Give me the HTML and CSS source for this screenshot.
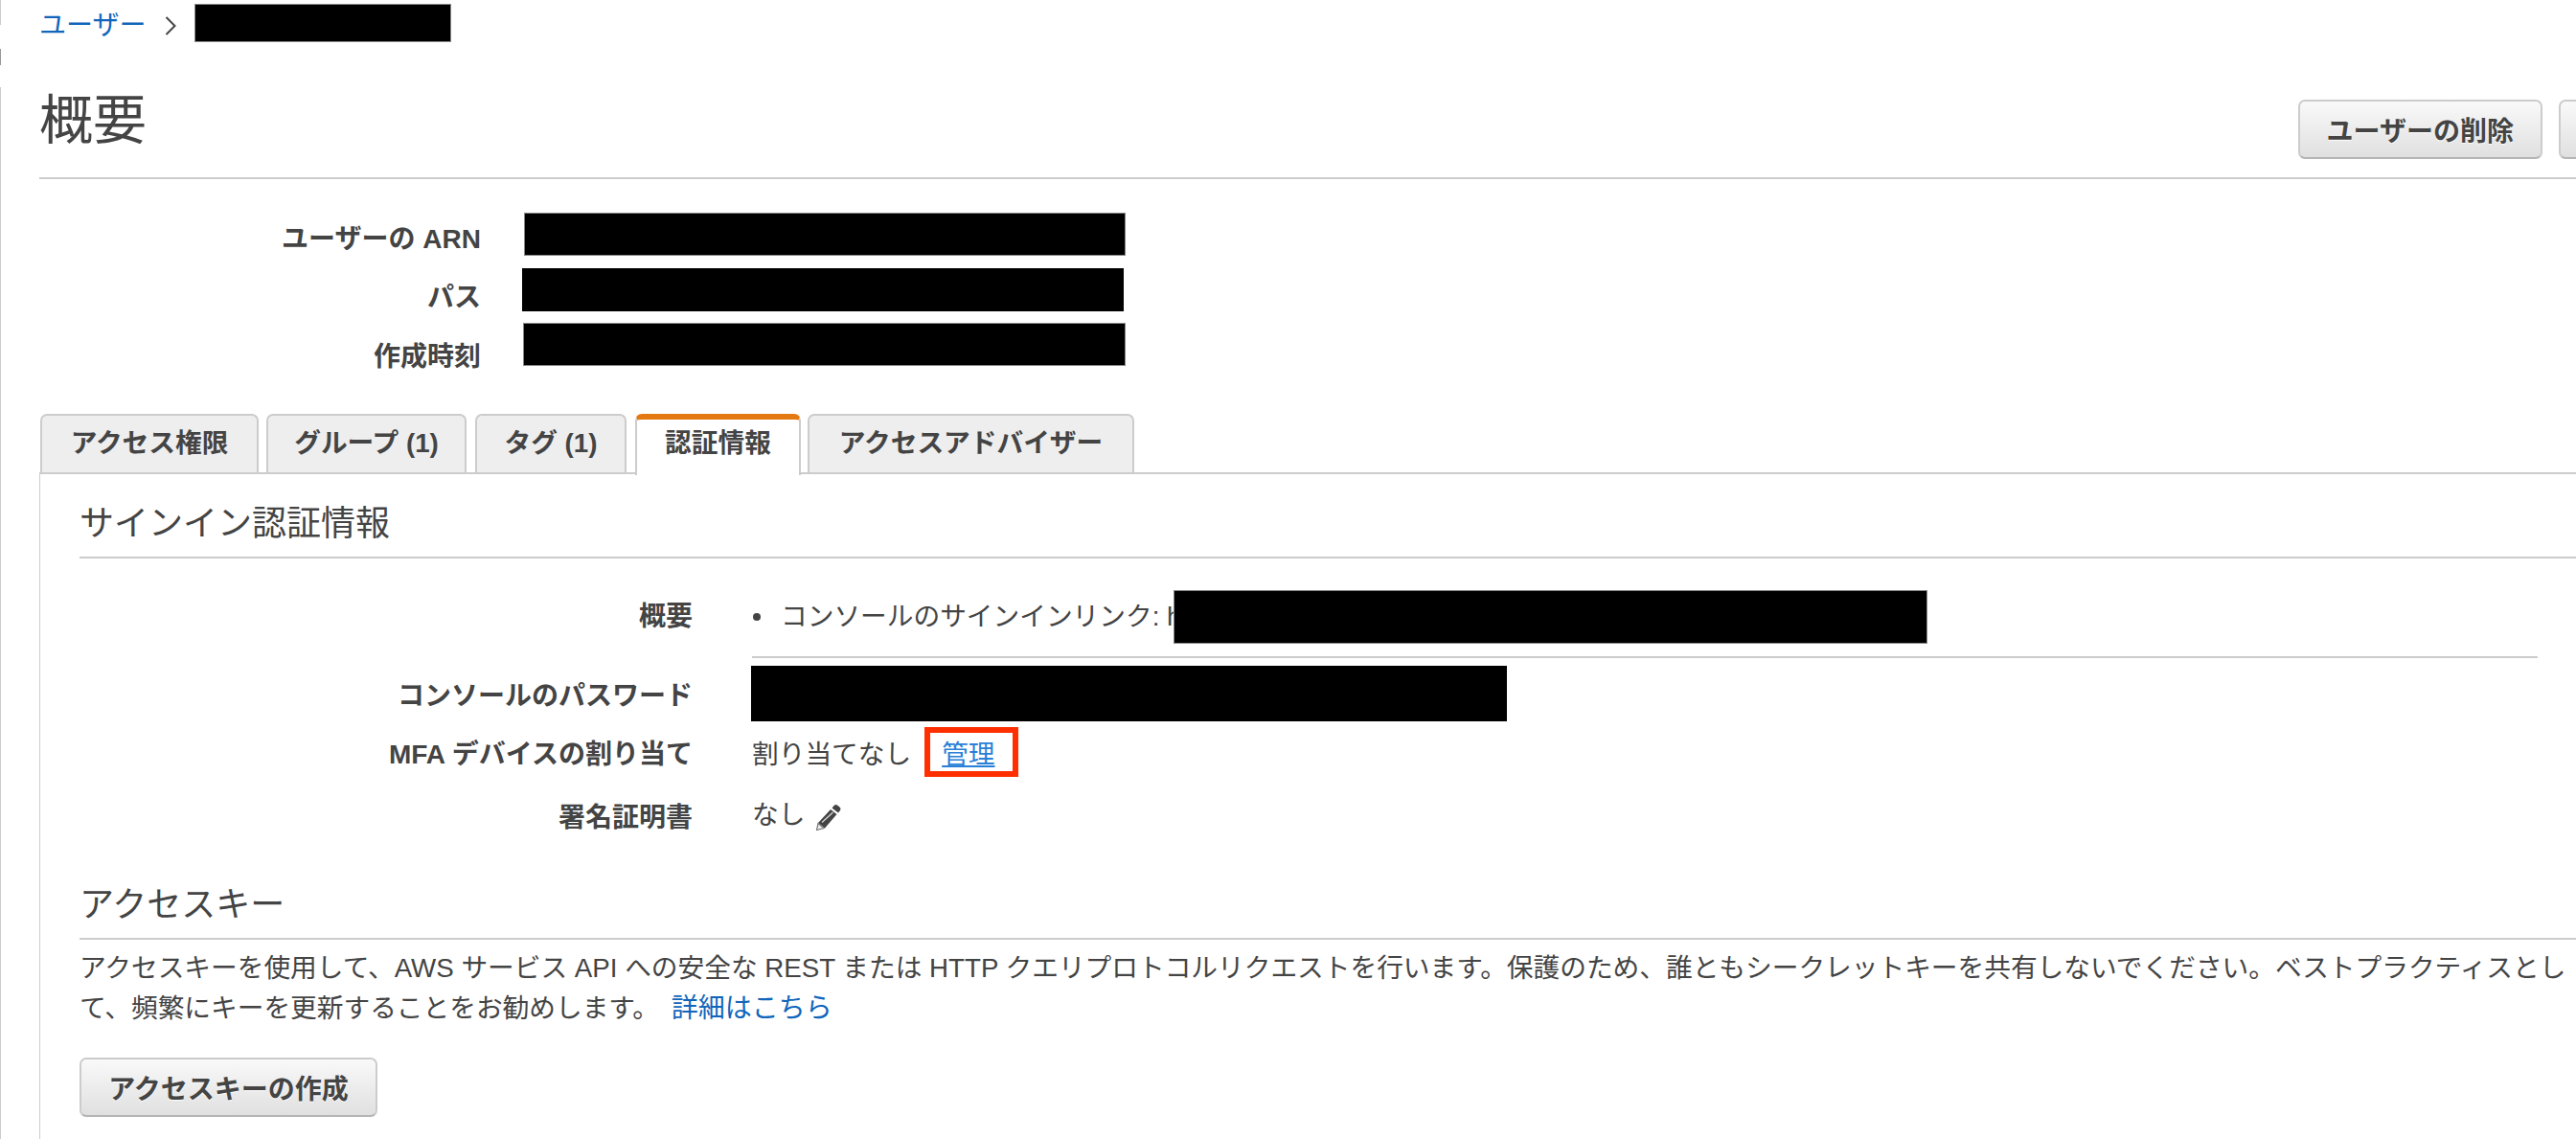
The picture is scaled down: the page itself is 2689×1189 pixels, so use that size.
FILE: index.html
```html
<!DOCTYPE html>
<html lang="ja">
<head>
  <meta charset="UTF-8">
  <title>ユーザー</title>
  <link rel="stylesheet" href="styles.css">
</head>
<body>
  <div class="rail">
    <div class="rail-top"></div>
    <div class="rail-dark"></div>
    <div class="rail-rest"></div>
  </div>
  <div class="content">

    <!-- Breadcrumb -->
    <div class="crumbs">
      <a href="#" class="link">ユーザー</a>
      <svg class="chevron" width="12" height="22" viewBox="0 0 12 22"><path d="M1.5 2 L10.5 11 L1.5 20" fill="none" stroke="#444" stroke-width="2"/></svg>
      <div class="redact edged crumb-redact"></div>
    </div>

    <!-- Title -->
    <div class="page-head">
      <h1>概要</h1>
      <div class="head-btns">
        <button type="button" class="btn">ユーザーの削除</button>
        <button type="button" class="btn btn-cut"></button>
      </div>
    </div>

    <!-- Summary -->
    <div class="summary">
      <div class="sum-row">
        <div class="sum-label label-arn">ユーザーの ARN</div>
        <div class="redact edged sum-arn"></div>
      </div>
      <div class="sum-row">
        <div class="sum-label label-path">パス</div>
        <div class="redact sum-path"></div>
      </div>
      <div class="sum-row">
        <div class="sum-label label-date">作成時刻</div>
        <div class="redact edged sum-date"></div>
      </div>
    </div>

    <!-- Tabs -->
    <div class="tabs">
      <div class="tab tab-perm">アクセス権限</div>
      <div class="tab tab-group">グループ (1)</div>
      <div class="tab tab-tag">タグ (1)</div>
      <div class="tab tab-active">認証情報</div>
      <div class="tab tab-adv">アクセスアドバイザー</div>
    </div>

    <div class="panel">
      <h2 class="first">サインイン認証情報</h2>

      <div class="creds">
        <div class="cred-row row-link">
          <div class="cred-label">概要</div>
          <div class="cred-value signin">
            <span class="bullet"></span>
            <span class="signin-text">コンソールのサインインリンク: h</span>
            <div class="redact edged signin-redact"></div>
          </div>
        </div>
        <div class="cred-row row-pass">
          <div class="cred-label">コンソールのパスワード</div>
          <div class="redact pass-redact"></div>
        </div>
        <div class="cred-row row-mfa">
          <div class="cred-label">MFA デバイスの割り当て</div>
          <div class="cred-value">
            <span>割り当てなし</span>
            <span class="manage-box"><a href="#" class="manage">管理</a></span>
          </div>
        </div>
        <div class="cred-row row-cert">
          <div class="cred-label">署名証明書</div>
          <div class="cred-value">
            <span class="cert-none">なし</span>
            <svg class="pencil" width="28" height="28" viewBox="0 0 28 28">
              <path d="M20 1.5 Q21.5 .5 23 1.5 L26 4 Q27 5.5 26 7 L24 9.5 L17.5 4.5 Z" fill="#444"/>
              <path d="M16 6 L22.5 11 L10 25.5 L3 20 Z" fill="#444"/>
              <path d="M3 20.5 L9 25.5 L1.5 27.5 Z" fill="#eee" stroke="#777" stroke-width="1.2"/>
              <path d="M7 19.5 L18.5 9" stroke="#ddd" stroke-width="1.2"/>
            </svg>
          </div>
        </div>
      </div>

      <h2 class="keys">アクセスキー</h2>
      <p class="keys-text">アクセスキーを使用して、AWS サービス API への安全な REST または HTTP クエリプロトコルリクエストを行います。保護のため、誰ともシークレットキーを共有しないでください。ベストプラクティスとし<br>て、頻繁にキーを更新することをお勧めします。 <a href="#" class="link more-link">詳細はこちら</a></p>
      <button type="button" class="btn btn-create">アクセスキーの作成</button>
    </div>

  </div>
</body>
</html>
```

FILE: styles.css
```css
html, body {
  margin: 0;
  padding: 0;
  height: 100%;
  overflow: hidden;
}
body {
  font-family: "Liberation Sans", "Noto Sans CJK JP", sans-serif;
  font-size: 28px;
  color: #444;
  background-color: #fff;
}
.rail {
  position: absolute;
  left: 0;
  top: 0;
  bottom: 0;
  width: 1px;
}
.rail-top {
  height: 26px;
  background-color: #ccc;
}
.rail-dark {
  height: 17px;
  margin-top: 25px;
  background-color: #999;
}
.rail-rest {
  height: 1098px;
  margin-top: 23px;
  background-color: #ccc;
}
.content {
  width: 2760px;
  margin-left: 41px;
}
.link {
  color: #1166bb;
  text-decoration: none;
}
.redact {
  background-color: #000;
}
.edged {
  box-sizing: border-box;
  border: 1px solid #888;
}

/* breadcrumb */
.crumbs {
  display: flex;
  align-items: center;
  height: 46px;
  padding-top: 2px;
  box-sizing: border-box;
}
.chevron {
  margin-left: 20px;
  margin-top: 5px;
}
.crumb-redact {
  width: 268px;
  height: 40px;
  margin-left: 19px;
}

/* page title */
.page-head {
  display: flex;
  justify-content: space-between;
  align-items: flex-start;
  height: 139px;
  border-bottom: 2px solid #ccc;
}
h1 {
  margin: 45px 0 0;
  font-size: 56px;
  line-height: 70px;
  font-weight: 400;
}
.head-btns {
  display: flex;
  gap: 17px;
  margin-top: 58px;
}
.btn {
  height: 62px;
  padding: 0 28px;
  font-family: inherit;
  font-size: 28px;
  font-weight: 700;
  color: #444;
  border: 2px solid #ccc;
  border-bottom-color: #b5b5b5;
  border-radius: 7px;
  background: linear-gradient(#f9f9f9, #e0e0e0);
  text-shadow: 0 1px 1px #fff;
}
.btn-cut {
  width: 130px;
}

/* summary */
.summary {
  padding-top: 35px;
}
.sum-row {
  display: flex;
  align-items: center;
  height: 45px;
  margin-bottom: 12.5px;
}
.sum-label {
  width: 461px;
  text-align: right;
  font-weight: 700;
}
.label-arn { padding-top: 4px; }
.label-path { padding-top: 12px; }
.label-date { padding-top: 20px; }
.sum-arn {
  width: 628px;
  height: 45px;
  margin-left: 45px;
}
.sum-path {
  width: 628px;
  height: 45px;
  margin-left: 43px;
}
.sum-date {
  width: 629px;
  height: 45px;
  margin-left: 44px;
}

/* tabs */
.tabs {
  display: flex;
  margin-top: 50px;
  height: 61px;
  padding-left: 1px;
}
.tab {
  height: 61px;
  box-sizing: border-box;
  margin-right: 9px;
  padding-top: 9px;
  text-align: center;
  font-size: 27.7px;
  font-weight: 700;
  line-height: 40px;
  white-space: nowrap;
  background-color: #eee;
  border: 2px solid #ccc;
  border-bottom: none;
  border-radius: 7px 7px 0 0;
}
.tab-perm { width: 228px; margin-right: 8px; }
.tab-group { width: 209px; }
.tab-tag { width: 158px; }
.tab-active {
  width: 173px;
  height: 64px;
  margin-right: 7px;
  position: relative;
  z-index: 1;
  background-color: #fff;
  border-top: 6px solid #e47911;
  padding-top: 5px;
}
.tab-adv { width: 341px; }

/* panel */
.panel {
  border-left: 1px solid #ccc;
  border-top: 2px solid #ccc;
  padding: 0 0 0 41px;
  height: 700px;
}
h2 {
  margin: 0;
  font-size: 36px;
  font-weight: 400;
  line-height: 60px;
  border-bottom: 2px solid #ccc;
}
h2.first {
  padding-top: 22px;
  padding-bottom: 4px;
}
h2.keys {
  margin-top: 38px;
  padding-bottom: 4px;
}

/* credentials */
.creds {
  padding-top: 33px;
}
.cred-row {
  display: flex;
  align-items: center;
}
.cred-label {
  width: 640px;
  flex: none;
  text-align: right;
  font-weight: 700;
  margin-right: 62px;
}
.cred-value {
  display: flex;
  align-items: center;
  font-size: 27.7px;
}
.row-link {
  height: 71px;
  width: 2566px;
  align-items: flex-start;
}
.row-link .cred-label {
  line-height: 56px;
}
.row-link .cred-value {
  flex: 1;
  height: 71px;
  border-bottom: 2px solid #ccc;
  box-sizing: border-box;
  align-items: flex-start;
}
.bullet {
  width: 8px;
  height: 8px;
  margin-left: 1px;
  margin-right: 21px;
  margin-top: 24px;
  border-radius: 50%;
  background-color: #444;
}
.signin-text {
  line-height: 56px;
  white-space: nowrap;
}
.signin-redact {
  width: 787px;
  height: 56px;
  margin-left: -8px;
}
.row-pass {
  height: 58px;
  margin-top: 8px;
}
.pass-redact {
  width: 789px;
  height: 58px;
  margin-left: -1px;
}
.row-mfa {
  height: 52px;
  margin-top: 6px;
}
.manage-box {
  display: flex;
  align-items: center;
  box-sizing: border-box;
  width: 98px;
  height: 52px;
  margin-left: 14px;
  padding-left: 12px;
  border: 6px solid #ff2f00;
}
.manage {
  color: #2a7fd9;
  text-decoration: underline;
}
.row-cert {
  height: 52px;
  margin-top: 14px;
}
.cert-none {
  padding-bottom: 6px;
}
.pencil {
  margin-left: 11px;
  margin-top: 4px;
}

/* access keys */
.keys-text {
  margin: 9px 0 0;
  font-size: 27.7px;
  line-height: 42px;
  white-space: nowrap;
}
.more-link {
  margin-left: 5px;
  font-size: 28px;
}
.btn-create {
  display: block;
  width: 311px;
  margin-top: 30px;
  padding: 0;
}
```
